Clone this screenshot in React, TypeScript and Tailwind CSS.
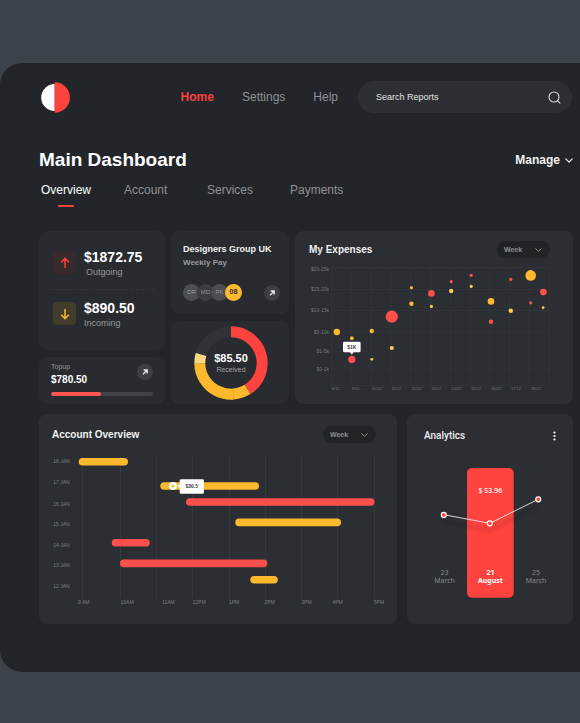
import React from "react";

const RED = "#fd4f4c";
const AMBER = "#fdb92d";
const LIGHT_AMBER = "#fcc955";

function Chevron({ className = "" }: { className?: string }) {
  return (
    <svg viewBox="0 0 10 6" className={className} fill="none" stroke="currentColor" strokeWidth="1.5" strokeLinecap="round" strokeLinejoin="round" aria-hidden="true">
      <path d="M1 1l4 4 4-4" />
    </svg>
  );
}

function Logo() {
  return (
    <svg viewBox="0 0 29 31" className="ml-0.5 h-[31px] w-[29px] shrink-0" aria-label="Logo" role="img">
      <path d="M13.7 2a13.5 13.5 0 0 0 0 27z" fill="#fff" />
      <path d="M13.7 .3a15.2 15.2 0 0 1 0 30.4z" fill="#ff433f" />
    </svg>
  );
}

function WeekSelect({ label }: { label: string }) {
  return (
    <div className="relative h-[17px] w-[53px] rounded-full bg-[#212427] text-[#8d8f92]">
      <select aria-label={label} className="block h-[17px] w-full appearance-none rounded-full bg-transparent pl-[7px] text-[7px] leading-[17px] font-bold outline-none">
        <option>Week</option>
      </select>
      <Chevron className="pointer-events-none absolute top-[7px] right-2 h-1 w-[7px]" />
    </div>
  );
}

function ArrowButton({ label, className = "" }: { label: string; className?: string }) {
  return (
    <button aria-label={label} className={`flex size-4 shrink-0 items-center justify-center rounded-full bg-[#3c3f44] text-[#e8e8e9] ${className}`}>
      <svg viewBox="0 0 8 8" className="size-2" fill="none" stroke="currentColor" strokeWidth="1.3" aria-hidden="true">
        <path d="M2.6 2h3.6v3.6M6 2.2L2 6.2" />
      </svg>
    </button>
  );
}

function Flow({ amount, label, up }: { amount: string; label: string; up: boolean }) {
  return (
    <div className="flex gap-2 px-[3px]">
      <div className={`mt-[2px] flex size-[23px] items-center justify-center rounded ${up ? "bg-[#38292c] text-[#fd403d]" : "bg-[#423c2b] text-[#fdb92d]"}`}>
        <svg viewBox="0 0 10 12" className={`h-3 w-2.5 ${up ? "" : "rotate-180"}`} fill="none" stroke="currentColor" strokeWidth="1.5" aria-hidden="true">
          <path d="M5 11V1.5M1.2 5.2L5 1.4l3.8 3.8" />
        </svg>
      </div>
      <div>
        <div className="text-sm leading-4 font-bold text-white">{amount}</div>
        <div className={`text-[9px] leading-[14px] text-[#96989b] ${up ? "pl-0.5" : ""}`}>{label}</div>
      </div>
    </div>
  );
}

const members = [
  { name: "DR", style: "bg-[#4c5055] text-[#96999c] text-[6px]" },
  { name: "MD", style: "bg-[#3a3d42] text-[#96999c] text-[6px]" },
  { name: "PK", style: "bg-[#4a4e53] text-[#96999c] text-[6px]" },
  { name: "08", style: "bg-[#fdb92d] text-[#2b2e32] text-[7px] font-bold" },
];

function arc(from: number, to: number) {
  const r = 31.2;
  const point = (deg: number) => {
    const a = ((deg - 90) * Math.PI) / 180;
    return `${(37 + r * Math.cos(a)).toFixed(2)} ${(37 + r * Math.sin(a)).toFixed(2)}`;
  };
  return `M${point(from)}A${r} ${r} 0 ${to - from > 180 ? 1 : 0} 1 ${point(to)}`;
}

function Donut() {
  return (
    <div className="relative">
      <svg viewBox="0 0 74 74" className="size-[74px]" fill="none" strokeWidth="11" aria-hidden="true">
        <circle cx="37" cy="37" r="31.2" stroke="#303338" />
        <path d={arc(0, 148)} stroke="#ff433f" />
        <path d={arc(148, 269)} stroke={AMBER} />
        <path d={arc(269, 286)} stroke="#ffd780" />
        <path d="M39.6 62.5v11" stroke="#dda026" strokeWidth="0.5" />
      </svg>
      <div className="absolute inset-0 flex flex-col items-center justify-center">
        <span className="text-[11px] leading-[14px] font-bold text-white">$85.50</span>
        <span className="text-[7px] leading-[10px] text-[#a0a2a5]">Received</span>
      </div>
    </div>
  );
}

const expenseRows: [string, number][] = [
  ["$20-25k", 7.3], ["$15-20k", 27.5], ["$10-15k", 48.7], ["$5-10k", 70], ["$1-5k", 89.7], ["$0-1k", 107.5],
];
const expenseDays = ["8/12", "9/12", "10/12", "11/12", "12/12", "13/12", "14/12", "15/12", "16/12", "17/12", "18/12"];
const expensePoints: [number, number, number, string][] = [
  [27.8, 70, 3.2, AMBER], [42.8, 76.2, 1.9, AMBER], [42.8, 97.4, 3.6, RED], [62.8, 69, 2.2, AMBER],
  [62.8, 97.3, 1.4, LIGHT_AMBER], [82.8, 54.7, 6.1, RED], [82.8, 86, 2.1, LIGHT_AMBER], [102.4, 25.7, 1.6, AMBER],
  [102.4, 41.7, 2.2, AMBER], [122.4, 31.4, 3.3, RED], [122.4, 44.4, 1.6, LIGHT_AMBER], [142.2, 19.7, 1.6, RED],
  [142.2, 29, 2.2, LIGHT_AMBER], [162.2, 13.4, 1.6, RED], [162.2, 24.4, 1.6, LIGHT_AMBER], [182, 39.4, 3.3, AMBER],
  [182, 59.7, 2.2, RED], [201.8, 17.4, 1.6, RED], [201.8, 48.7, 2.2, LIGHT_AMBER], [221.7, 13.4, 5.3, AMBER],
  [221.7, 40.8, 1.6, RED], [234.4, 30.1, 3.3, RED], [234.1, 45.7, 1.4, LIGHT_AMBER],
];

function ExpensesChart() {
  return (
    <svg viewBox="0 0 241 132" className="mt-1 w-full" role="img" aria-label="Expenses by day">
      <g stroke="#33363b" strokeWidth="0.8">
        {[5.5, 27.5, 48.5, 70, 90, 107, 123.5].map((y) => <path key={y} d={`M22 ${y}H241`} />)}
        {Array.from({ length: 12 }, (_, i) => <path key={i} d={`M${22.5 + i * 19.8} 5.5V123.5`} />)}
      </g>
      <g fill="#74777b" fontSize="5" textAnchor="end">
        {expenseRows.map(([t, y]) => <text key={t} x="20" y={y + 1.7}>{t}</text>)}
      </g>
      <g fill="#74777b" fontSize="4">
        {expenseDays.map((t, i) => <text key={t} x={22.8 + i * 19.9} y="128">{t}</text>)}
      </g>
      {expensePoints.map(([x, y, r, c]) => <circle key={`${x}-${y}`} cx={x} cy={y} r={r} fill={c} />)}
      <path d="M40.8 90h4l-2 2.6z" fill="#fff" />
      <rect x="34" y="79.7" width="17.6" height="10.6" rx="1.4" fill="#fff" />
      <text x="42.8" y="86.8" textAnchor="middle" fontSize="5" fontWeight="700" fill="#3a3d41">$1K</text>
    </svg>
  );
}

const days: [string, number][] = [
  ["18 JAN", 11], ["17 JAN", 32], ["16 JAN", 54], ["15 JAN", 74.5], ["14 JAN", 95], ["13 JAN", 115.5], ["12 JAN", 136],
];
const hours: [string, number][] = [
  ["9 AM", 26], ["10AM", 68.5], ["11AM", 110], ["12PM", 140.5], ["1PM", 177], ["2PM", 212.5], ["3PM", 249.5], ["4PM", 280.5], ["5PM", 322],
];
const spans: [number, number, number, string][] = [
  [26.7, 76, 11.7, AMBER], [108.3, 207, 36, AMBER], [134, 322.5, 52, RED], [183.3, 289, 72.4, AMBER],
  [59.8, 97.8, 92.8, RED], [68, 215.4, 113.4, RED], [198.3, 225.8, 129.7, AMBER],
];

function AccountChart() {
  return (
    <svg viewBox="0 0 335 162" className="mt-[7px] w-full" role="img" aria-label="Account activity by hour">
      <g stroke="#3a3d42" strokeWidth="0.8">
        {[30.4, 68.5, 104.6, 140.6, 177.6, 213.6, 249.6, 285.6, 322.6].map((x) => <path key={x} d={`M${x} 5V148.5`} />)}
      </g>
      <g fill="#7b7e82" fontSize="5">
        {days.map(([t, y]) => <text key={t} x="1.3" y={y + 1.8}>{t}</text>)}
        {hours.map(([t, x]) => <text key={t} x={x} y="153.8">{t}</text>)}
      </g>
      {spans.map(([a, b, y, c]) => <rect key={y} x={a} y={y - 3.8} width={b - a} height="7.6" rx="3.8" fill={c} />)}
      <circle cx="121" cy="36" r="4" fill="#fff" />
      <circle cx="121" cy="36" r="1.6" fill={AMBER} />
      <path d="M128 34v4l-2.6-2z" fill="#fff" />
      <rect x="127.7" y="29.2" width="24.2" height="14.6" rx="1.4" fill="#fff" />
      <text x="139.8" y="37.8" textAnchor="middle" fontSize="5" fontWeight="700" fill="#3a3d41">$30.5</text>
    </svg>
  );
}

function AnalyticsChart() {
  return (
    <svg viewBox="0 0 132 144" className="mt-4 w-full overflow-visible" role="img" aria-label="Daily analytics">
      <defs>
        <filter id="line-shadow" x="-20%" y="-60%" width="140%" height="260%">
          <feGaussianBlur stdDeviation="2.2" />
        </filter>
      </defs>
      <rect x="43" y="8" width="46.7" height="129.8" rx="5" fill="#ff433f" />
      <path d="M19.8 61.7L65.8 70.3 114.3 46.3" fill="none" stroke="#000" strokeOpacity="0.22" strokeWidth="2" filter="url(#line-shadow)" />
      <path d="M19.8 54.7L65.8 63.3 114.3 39.3" fill="none" stroke="#e9e9ea" strokeWidth="0.9" />
      {[[19.8, 54.9], [65.8, 63.3], [114.3, 39.3]].map(([x, y]) => (
        <circle key={x} cx={x} cy={y} r="2.5" fill="#ff433f" stroke="#fff" strokeWidth="1.2" />
      ))}
      <g textAnchor="middle" fontSize="7" fill="#85888b" className="font-['Noto_Sans','Open_Sans',sans-serif]">
        <text x="20.6" y="114.8">23</text>
        <text x="20.6" y="122.8">March</text>
        <text x="112" y="114.5">25</text>
        <text x="112" y="122.5">March</text>
        <g fill="#fff" fontWeight="700">
          <text x="66.4" y="114.8">21</text>
          <text x="66.4" y="122.8">August</text>
          <text x="66.4" y="32.5" fontWeight="500">$ 53.96</text>
        </g>
      </g>
    </svg>
  );
}

export default function App() {
  return (
    <div className="min-h-screen bg-[#3d434b] pt-[63px] pb-[51px] font-['Liberation_Sans',Arial,sans-serif]">
      <div className="rounded-l-[22px] bg-[#222529] pt-[18px] pr-[7px] pb-12 pl-[39px]">
        <header className="flex items-center pr-px">
          <Logo />
          <nav className="mr-5 ml-auto flex gap-7 text-xs leading-4 text-[#8f9194]">
            <a href="#home" className="font-bold text-[#fd403d]">Home</a>
            <a href="#settings">Settings</a>
            <a href="#help">Help</a>
          </nav>
          <form className="flex h-8 w-[214px] items-center rounded-full bg-[#2c2f33] pr-[11px] pl-[18px]">
            <input aria-label="Search reports" type="text" placeholder="Search Reports" className="min-w-0 flex-1 bg-transparent text-[9px] leading-4 text-[#e4e4e5] outline-none placeholder:text-[#e4e4e5]" />
            <button type="button" aria-label="Search" className="text-[#d9dadb]">
              <svg viewBox="0 0 13 13" className="size-[13px]" fill="none" stroke="currentColor" strokeWidth="1.1" strokeLinecap="round" aria-hidden="true">
                <circle cx="6" cy="6" r="5" />
                <path d="M9.6 9.8l2.4 2.4" />
              </svg>
            </button>
          </form>
        </header>

        <div className="mt-[35px] flex items-center justify-between">
          <h1 className="text-[19px] leading-6 font-bold text-white">Main Dashboard</h1>
          <button className="flex items-center gap-[5px] text-xs leading-4 font-bold text-[#f1f1f2]">
            Manage
            <Chevron className="h-[5px] w-2" />
          </button>
        </div>

        <nav className="mt-2.5 grid grid-cols-[repeat(4,83px)] pl-0.5 text-xs leading-4 text-[#8f9194]">
          <a href="#overview" className="flex flex-col items-center justify-self-start text-white">
            Overview
            <span className="mt-[7px] h-0.5 w-4 rounded-full bg-[#fd403d]" />
          </a>
          <a href="#account">Account</a>
          <a href="#services">Services</a>
          <a href="#payments">Payments</a>
        </nav>

        <main className="mt-6 flex flex-col gap-2.5">
          <div className="grid grid-cols-[126fr_118fr_278fr] gap-1.5">
            <div className="flex flex-col gap-[7px]">
              <section className="rounded-lg bg-[#282b2f] px-[11px] pt-[18px] pb-5">
                <Flow amount="$1872.75" label="Outgoing" up />
                <div className="my-2.5 border-t border-dashed border-[#33363a]" />
                <Flow amount="$890.50" label="Incoming" up={false} />
              </section>
              <section className="rounded-lg bg-[#282b2f] px-3 pt-1 pb-2">
                <div className="flex justify-between">
                  <div>
                    <div className="text-[7px] leading-3 text-[#96989b]">Topup</div>
                    <div className="text-[10px] leading-[14px] font-bold text-white">$780.50</div>
                  </div>
                  <ArrowButton label="Top up" className="mt-[3px]" />
                </div>
                <div className="mt-[5px] h-1 overflow-hidden rounded-full bg-[#404348]">
                  <div className="h-full w-[49%] rounded-full bg-[#ff5552]" />
                </div>
              </section>
            </div>

            <div className="flex flex-col gap-[7px]">
              <section className="rounded-lg bg-[#282b2f] pt-[11px] pr-[9px] pb-[13px] pl-3">
                <h2 className="text-[9px] leading-[14px] font-bold whitespace-nowrap text-[#f4f4f5]">Designers Group UK</h2>
                <p className="text-[8px] leading-[14px] font-bold text-[#98999c]">Weekly Pay</p>
                <div className="mt-3.5 flex h-[17px] items-center justify-between">
                  <div className="flex -space-x-[3px]">
                    {members.map((m) => (
                      <span key={m.name} className={`flex size-[17px] items-center justify-center rounded-full ${m.style}`}>{m.name}</span>
                    ))}
                  </div>
                  <ArrowButton label="Open group" />
                </div>
              </section>
              <section className="flex flex-1 items-center justify-center rounded-lg bg-[#282b2f] pl-0.5">
                <Donut />
              </section>
            </div>

            <section className="rounded-lg bg-[#2b2e32] pt-2.5 pr-[23px] pl-3.5">
              <div className="flex items-center justify-between">
                <h2 className="text-[10px] leading-[17px] font-bold text-[#f1f1f2]">My Expenses</h2>
                <WeekSelect label="Expenses range" />
              </div>
              <ExpensesChart />
            </section>
          </div>

          <div className="grid grid-cols-[358fr_166fr] gap-2.5">
            <section className="rounded-lg bg-[#2b2e32] pt-3 pr-2.5 pb-3 pl-[13px]">
              <div className="flex items-center justify-between pr-[11px]">
                <h2 className="text-[10px] leading-[17px] font-bold text-[#f1f1f2]">Account Overview</h2>
                <WeekSelect label="Account range" />
              </div>
              <AccountChart />
            </section>
            <section className="rounded-lg bg-[#2b2e32] px-[17px] pt-3.5">
              <div className="flex items-center justify-between">
                <h2 className="font-['Roboto',sans-serif] text-[10px] leading-4 font-medium text-[#f1f1f2]">Analytics</h2>
                <button aria-label="More options" className="text-white">
                  <svg viewBox="0 0 3 10" className="h-2.5 w-[3px]" fill="currentColor" aria-hidden="true">
                    <circle cx="1.5" cy="1.5" r="1.1" />
                    <circle cx="1.5" cy="5" r="1.1" />
                    <circle cx="1.5" cy="8.5" r="1.1" />
                  </svg>
                </button>
              </div>
              <AnalyticsChart />
            </section>
          </div>
        </main>
      </div>
    </div>
  );
}
